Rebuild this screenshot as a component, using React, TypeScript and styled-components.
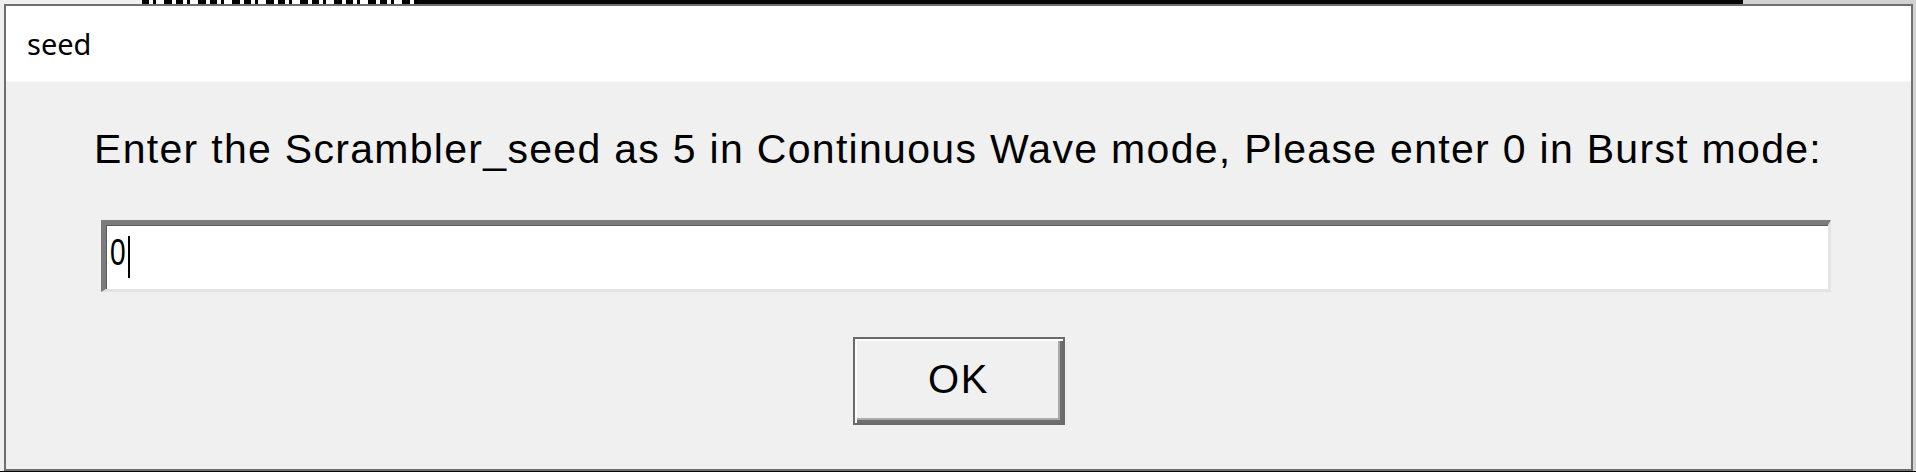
import React from "react";
import styled, { createGlobalStyle } from "styled-components";

const GlobalStyle = createGlobalStyle`
  html, body {
    margin: 0;
    padding: 0;
    background: #ececec;
  }
  body {
    width: 1916px;
    height: 472px;
    overflow: hidden;
  }
`;

const Screen = styled.div`
  width: 1916px;
  height: 472px;
  display: flex;
  flex-direction: column;
  background: #ececec;
`;

const BackdropStrip = styled.div<{ $h: number }>`
  height: ${(p) => p.$h}px;
  flex: none;
  display: flex;
`;

type Tone = "light" | "text" | "dark" | "gray";

const toneBg: Record<Tone, string> = {
  light: "#f0f0f0",
  text: "repeating-linear-gradient(90deg, #000 0 7px, #fff 7px 11px, #000 11px 14px, #fff 14px 22px, #000 22px 30px, #fff 30px 34px)",
  dark: "#050505",
  gray: "#d2d2d2",
};

const BackdropSegment = styled.div<{ $w?: number; $tone: Tone }>`
  ${(p) => (p.$w ? `width: ${p.$w}px; flex: none;` : "flex: 1;")}
  background: ${(p) => toneBg[p.$tone]};
`;

const Middle = styled.div`
  display: flex;
  flex: none;
  height: 467px;
`;

const Gutter = styled.div<{ $w?: number; $tone: Tone }>`
  ${(p) => (p.$w ? `width: ${p.$w}px; flex: none;` : "flex: 1;")}
  background: ${(p) => toneBg[p.$tone]};
`;

const Window = styled.div`
  width: 1909px;
  height: 467px;
  box-sizing: border-box;
  border: 2px solid #6f6f6f;
  display: flex;
  flex-direction: column;
  flex: none;
`;

const TitleBar = styled.div`
  height: 76px;
  flex: none;
  background: #ffffff;
  display: flex;
  align-items: center;
  padding-left: 21px;
  border-bottom: 1px solid #f6f6f6;
  box-sizing: border-box;
`;

const TitleText = styled.span`
  font-family: "Noto Sans", "Open Sans", sans-serif;
  font-size: 29px;
  color: #000;
  line-height: 38px;
`;

const Body = styled.div`
  flex: 1;
  background: #f0f0f0;
  display: flex;
  flex-direction: column;
  align-items: center;
  padding-top: 44px;
`;

const Form = styled.div`
  align-self: stretch;
  display: flex;
  flex-direction: column;
  align-items: flex-start;
  padding-left: 88px;
`;

const Prompt = styled.div`
  font-family: "Liberation Sans", Arial, sans-serif;
  font-size: 41px;
  letter-spacing: 1.3px;
  line-height: 46px;
  color: #000;
  white-space: nowrap;
`;

const Entry = styled.div`
  margin-top: 48px;
  margin-left: 7px;
  width: 1730px;
  height: 72px;
  box-sizing: border-box;
  background: #ffffff;
  border-style: solid;
  border-width: 5px 3px 3px 5px;
  border-color: #7b7b7b #e4e4e4 #e4e4e4 #7b7b7b;
  box-shadow: inset 1px 1px 0 #5c5c5c;
  display: flex;
  align-items: flex-start;
  padding: 11px 0 0 4px;
`;

const EntryValue = styled.span`
  display: inline-block;
  font-family: "Liberation Sans", Arial, sans-serif;
  font-size: 36px;
  line-height: 34px;
  color: #000;
  transform: scaleX(0.78);
  transform-origin: left center;
  width: 16px;
`;

const Caret = styled.span`
  width: 2px;
  height: 42px;
  margin-left: 2px;
  background: #000;
  flex: none;
`;

const OkButton = styled.button`
  margin-top: 45px;
  width: 212px;
  height: 88px;
  box-sizing: border-box;
  border: 2px solid #6a6a6a;
  background: #f0f0f0;
  box-shadow:
    inset 2px 2px 0 #fdfdfd,
    inset -3px -3px 0 #6d6d6d,
    inset -5px -5px 0 #ababab;
  font-family: "Liberation Sans", Arial, sans-serif;
  font-size: 40px;
  letter-spacing: 1.5px;
  color: #000;
  padding: 0 0 4px 0;
  display: flex;
  align-items: center;
  justify-content: center;
  cursor: default;
  outline: none;
`;

export default function App() {
  return (
    <>
      <GlobalStyle />
      <Screen>
        <BackdropStrip $h={4}>
          <BackdropSegment $w={142} $tone="light" />
          <BackdropSegment $w={276} $tone="text" />
          <BackdropSegment $w={1325} $tone="dark" />
          <BackdropSegment $tone="gray" />
        </BackdropStrip>
        <Middle>
          <Gutter $w={4} $tone="light" />
          <Window>
            <TitleBar>
              <TitleText>seed</TitleText>
            </TitleBar>
            <Body>
              <Form>
                <Prompt>
                  Enter the Scrambler_seed as 5 in Continuous Wave mode, Please enter 0 in Burst mode:
                </Prompt>
                <Entry>
                  <EntryValue>0</EntryValue>
                  <Caret />
                </Entry>
              </Form>
              <OkButton type="button">OK</OkButton>
            </Body>
          </Window>
          <Gutter $tone="gray" />
        </Middle>
        <BackdropStrip $h={1}>
          <BackdropSegment $tone="dark" />
        </BackdropStrip>
      </Screen>
    </>
  );
}
